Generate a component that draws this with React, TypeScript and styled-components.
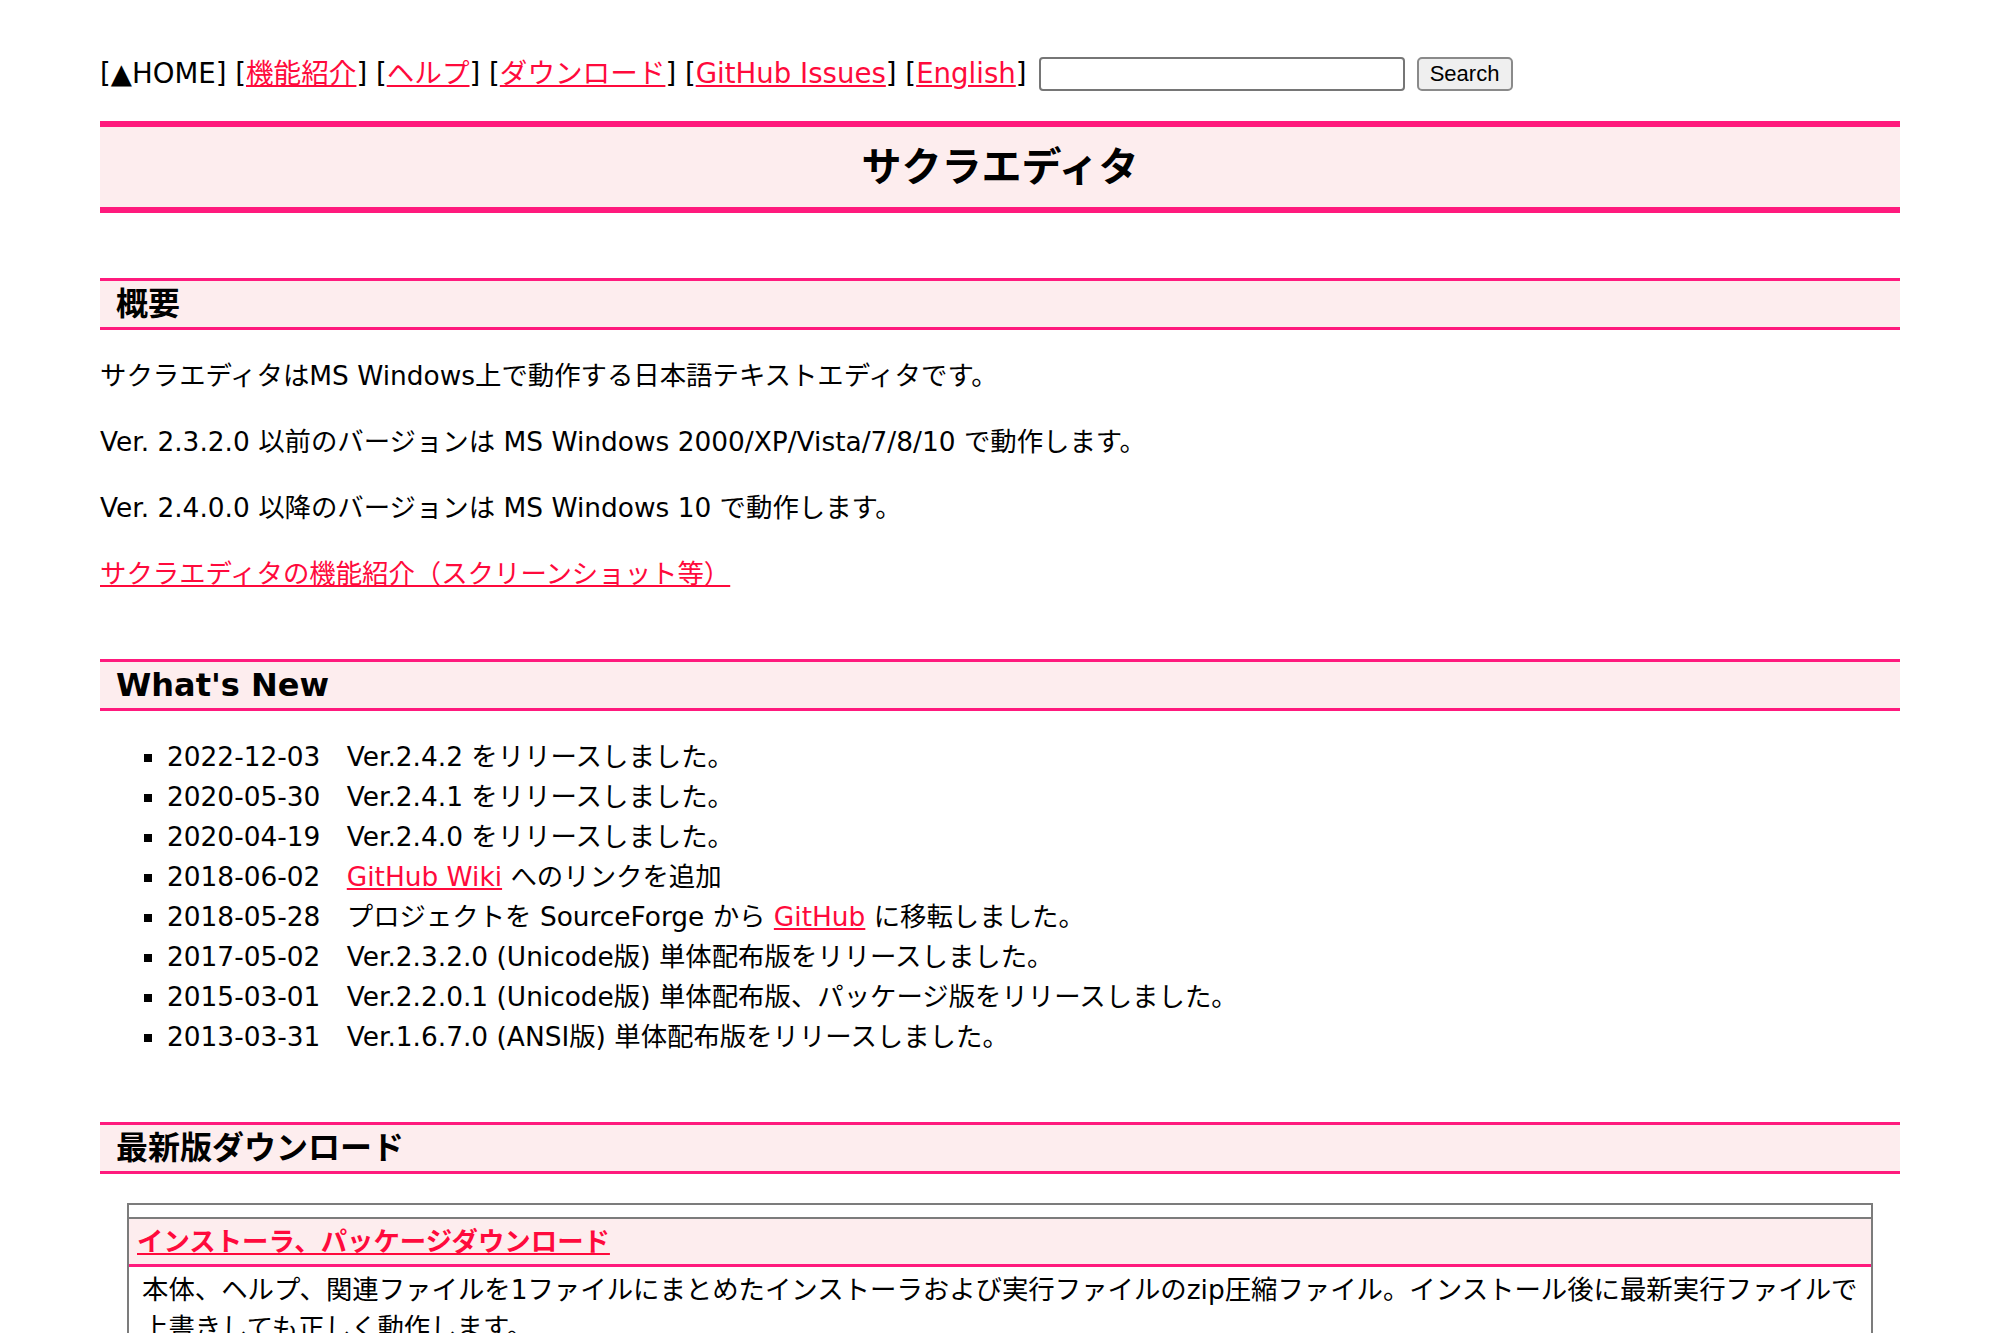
import React from "react";
import styled, { createGlobalStyle } from "styled-components";

const PINK = "#ff1a7d";
const PALE = "#fdedee";
const LINK = "#ff0a3c";

const GlobalStyle = createGlobalStyle`
  html, body {
    margin: 0;
    padding: 0;
    background: #fff;
  }
  body {
    font-family: "DejaVu Sans", "Noto Sans CJK JP", sans-serif;
    font-size: 26.4px;
    line-height: 40px;
    color: #000;
  }
  a {
    color: ${LINK};
    text-decoration: underline;
  }
`;

const Page = styled.div`
  padding: 54px 100px 0;
`;

const Nav = styled.nav`
  display: flex;
  align-items: center;
  gap: 12px;
  height: 40px;
`;

const NavLinks = styled.span`
  white-space: nowrap;
  font-size: 27.6px;
`;

const SearchBox = styled.input`
  box-sizing: border-box;
  width: 366px;
  height: 34px;
  border: 2px solid #767676;
  border-radius: 4px;
  background: #fff;
`;

const SearchButton = styled.button`
  box-sizing: border-box;
  height: 34px;
  width: 96px;
  padding: 0;
  border: 2px solid #8a8a8a;
  border-radius: 5px;
  background: #efefef;
  font-family: "Liberation Sans", Arial, sans-serif;
  font-size: 22px;
  color: #000;
`;

const Title = styled.h1`
  margin: 27px 0 0;
  border-top: 6px solid ${PINK};
  border-bottom: 6px solid ${PINK};
  background: ${PALE};
  font-size: 40px;
  line-height: 80px;
  font-weight: bold;
  text-align: center;
`;

const Heading = styled.h2`
  margin: 65px 0 26px;
  padding-left: 16px;
  border-top: 3px solid ${PINK};
  border-bottom: 3px solid ${PINK};
  background: ${PALE};
  font-size: 32px;
  line-height: 46px;
  font-weight: bold;
`;

const Para = styled.p`
  margin: 26px 0;
`;

const NewsList = styled.ul`
  margin: 26px 0;
  padding-left: 67px;
  list-style: square;
`;

const NewsItem = styled.li`
  line-height: 40px;
`;

const DownloadTable = styled.div`
  margin: 29px 27px 0;
  border: 2px solid #7c7c7c;
  border-bottom: none;
`;

const SpacerRow = styled.div`
  height: 12px;
  border-bottom: 2px solid #7c7c7c;
`;

const HeadCell = styled.div`
  padding: 0 8px;
  height: 45px;
  line-height: 45px;
  background: ${PALE};
  border-bottom: 3px solid ${PINK};
  font-weight: bold;
`;

const BodyCell = styled.div`
  padding: 4px 6px 0 13px;
  line-height: 38px;
`;

type News = { date: string; body: React.ReactNode };

const news: News[] = [
  { date: "2022-12-03", body: "Ver.2.4.2 をリリースしました。" },
  { date: "2020-05-30", body: "Ver.2.4.1 をリリースしました。" },
  { date: "2020-04-19", body: "Ver.2.4.0 をリリースしました。" },
  {
    date: "2018-06-02",
    body: (
      <>
        <a href="#wiki">GitHub Wiki</a> へのリンクを追加
      </>
    ),
  },
  {
    date: "2018-05-28",
    body: (
      <>
        プロジェクトを SourceForge から <a href="#github">GitHub</a> に移転しました。
      </>
    ),
  },
  { date: "2017-05-02", body: "Ver.2.3.2.0 (Unicode版) 単体配布版をリリースしました。" },
  {
    date: "2015-03-01",
    body: "Ver.2.2.0.1 (Unicode版) 単体配布版、パッケージ版をリリースしました。",
  },
  { date: "2013-03-31", body: "Ver.1.6.7.0 (ANSI版) 単体配布版をリリースしました。" },
];

function App() {
  return (
    <>
      <GlobalStyle />
      <Page>
        <Nav>
          <NavLinks>
            [▲HOME] [<a href="#features">機能紹介</a>] [<a href="#help">ヘルプ</a>] [
            <a href="#download">ダウンロード</a>] [<a href="#issues">GitHub Issues</a>] [
            <a href="#en">English</a>]
          </NavLinks>
          <SearchBox type="text" />
          <SearchButton type="button">Search</SearchButton>
        </Nav>

        <Title>サクラエディタ</Title>

        <Heading>概要</Heading>
        <Para>サクラエディタはMS Windows上で動作する日本語テキストエディタです。</Para>
        <Para>Ver. 2.3.2.0 以前のバージョンは MS Windows 2000/XP/Vista/7/8/10 で動作します。</Para>
        <Para>Ver. 2.4.0.0 以降のバージョンは MS Windows 10 で動作します。</Para>
        <Para>
          <a href="#features">サクラエディタの機能紹介（スクリーンショット等）</a>
        </Para>

        <Heading>What's New</Heading>
        <NewsList>
          {news.map((n) => (
            <NewsItem key={n.date}>
              {n.date}
              {"\u3000"}
              {n.body}
            </NewsItem>
          ))}
        </NewsList>

        <Heading>最新版ダウンロード</Heading>
        <DownloadTable>
          <SpacerRow />
          <HeadCell>
            <a href="#installer">インストーラ、パッケージダウンロード</a>
          </HeadCell>
          <BodyCell>
            本体、ヘルプ、関連ファイルを1ファイルにまとめたインストーラおよび実行ファイルのzip圧縮ファイル。インストール後に最新実行ファイルで上書きしても正しく動作します。
          </BodyCell>
        </DownloadTable>
      </Page>
    </>
  );
}

export default App;
